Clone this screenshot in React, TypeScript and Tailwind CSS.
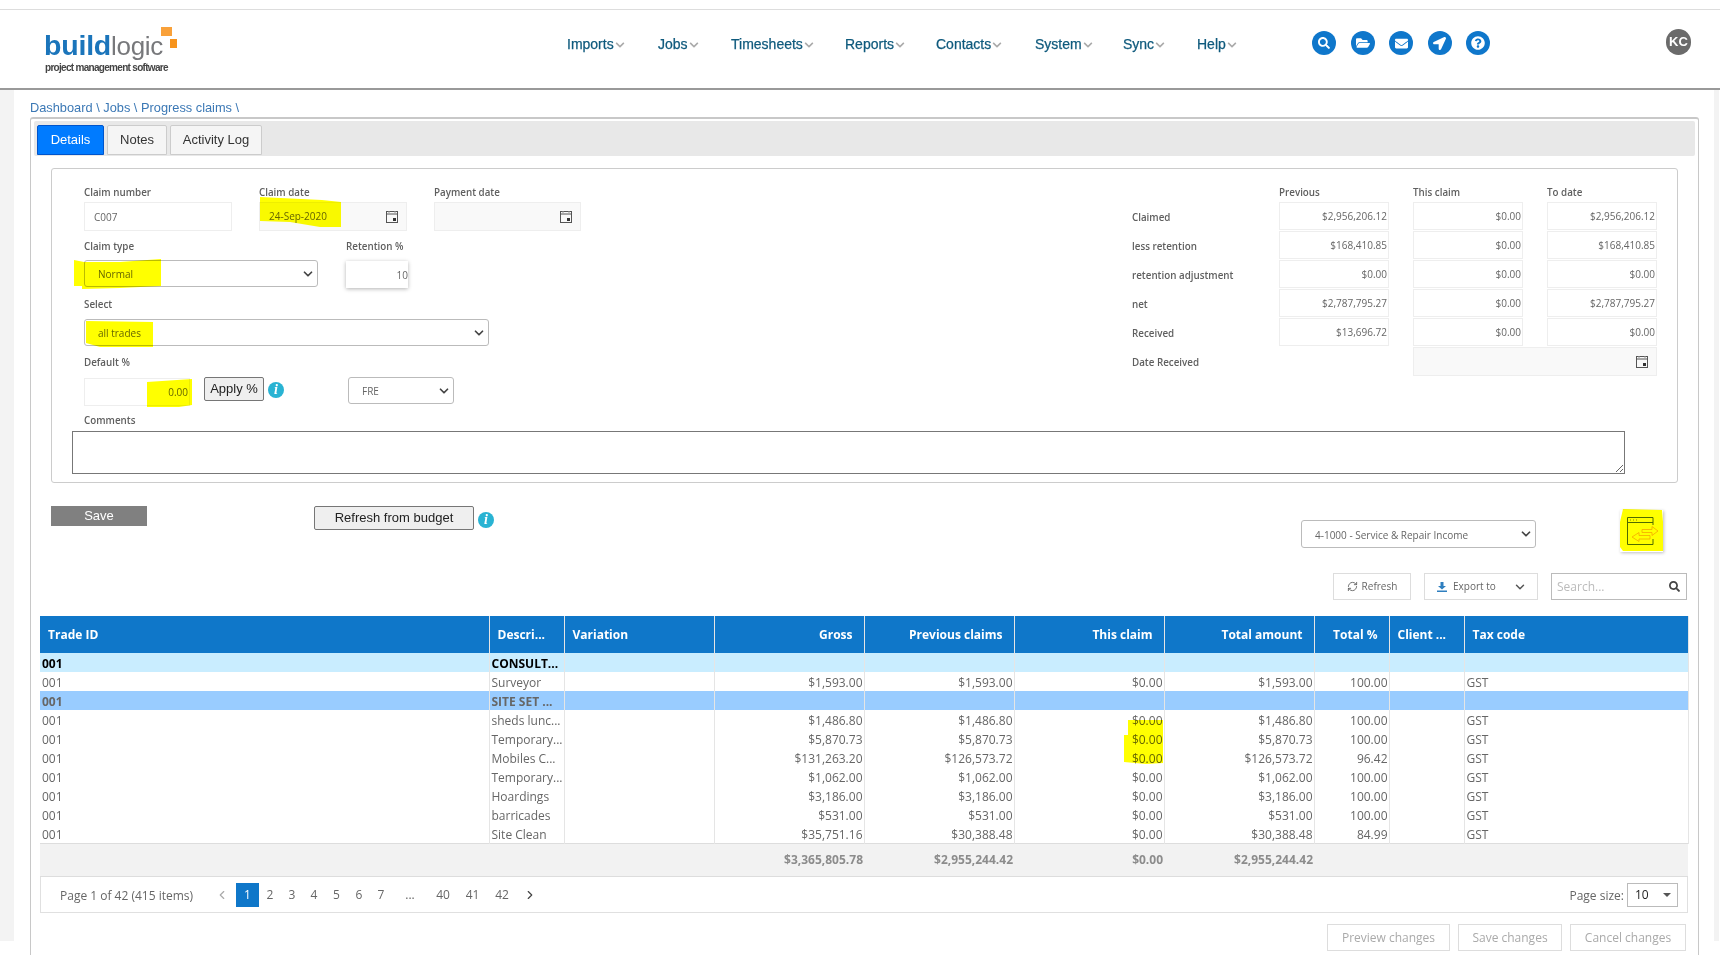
import { ChevronDown, ChevronLeft, ChevronRight, RefreshCw } from "lucide-react";
import {
    FaChevronDown,
    FaEnvelope,
    FaFolderOpen,
    FaLocationArrow,
    FaQuestionCircle,
    FaSearch,
} from "react-icons/fa";

const ARIAL = "font-['Liberation_Sans',Arial,sans-serif]";
const LABEL = "block h-[14px] text-[9.8px] font-semibold leading-[14px] text-[#5f5f5f]";
const ROW_LABEL = "pt-[9px] text-[9.8px] font-semibold leading-[14px] text-[#5f5f5f]";
const FIELD =
    "h-[29px] border border-[#eee] bg-white px-[9px] text-[10px] text-[#666] outline-none";
const AMOUNT =
    "h-[28px] w-[110px] border border-[#eee] bg-white pr-[1px] text-right text-[10px] text-[#666] outline-none";

const NAV = [
    { name: "Imports", width: "w-[91px]" },
    { name: "Jobs", width: "w-[73px]" },
    { name: "Timesheets", width: "w-[114px]" },
    { name: "Reports", width: "w-[91px]" },
    { name: "Contacts", width: "w-[99px]" },
    { name: "System", width: "w-[88px]" },
    { name: "Sync", width: "w-[74px]" },
    { name: "Help", width: "w-[60px]" },
];

const SUMMARY = [
    { label: "Claimed", values: ["$2,956,206.12", "$0.00", "$2,956,206.12"] },
    { label: "less retention", values: ["$168,410.85", "$0.00", "$168,410.85"] },
    { label: "retention adjustment", values: ["$0.00", "$0.00", "$0.00"] },
    { label: "net", values: ["$2,787,795.27", "$0.00", "$2,787,795.27"] },
    { label: "Received", values: ["$13,696.72", "$0.00", "$0.00"] },
];

const COLUMNS = [
    { title: "Trade ID", width: "w-[449px]", right: false },
    { title: "Descri...", width: "w-[75px]", right: false },
    { title: "Variation", width: "w-[150px]", right: false },
    { title: "Gross", width: "w-[150px]", right: true },
    { title: "Previous claims", width: "w-[150px]", right: true },
    { title: "This claim", width: "w-[150px]", right: true },
    { title: "Total amount", width: "w-[150px]", right: true },
    { title: "Total %", width: "w-[75px]", right: true },
    { title: "Client ...", width: "w-[75px]", right: false },
    { title: "Tax code", width: "w-[224px]", right: false },
];

type Row = { cells: string[]; tone?: "light" | "mid" };

const ROWS: Row[] = [
    { cells: ["001", "CONSULT...", "", "", "", "", "", "", "", ""], tone: "light" },
    { cells: ["001", "Surveyor", "", "$1,593.00", "$1,593.00", "$0.00", "$1,593.00", "100.00", "", "GST"] },
    { cells: ["001", "SITE SET ...", "", "", "", "", "", "", "", ""], tone: "mid" },
    { cells: ["001", "sheds lunc...", "", "$1,486.80", "$1,486.80", "$0.00", "$1,486.80", "100.00", "", "GST"] },
    { cells: ["001", "Temporary...", "", "$5,870.73", "$5,870.73", "$0.00", "$5,870.73", "100.00", "", "GST"] },
    { cells: ["001", "Mobiles C...", "", "$131,263.20", "$126,573.72", "$0.00", "$126,573.72", "96.42", "", "GST"] },
    { cells: ["001", "Temporary...", "", "$1,062.00", "$1,062.00", "$0.00", "$1,062.00", "100.00", "", "GST"] },
    { cells: ["001", "Hoardings", "", "$3,186.00", "$3,186.00", "$0.00", "$3,186.00", "100.00", "", "GST"] },
    { cells: ["001", "barricades", "", "$531.00", "$531.00", "$0.00", "$531.00", "100.00", "", "GST"] },
    { cells: ["001", "Site Clean", "", "$35,751.16", "$30,388.48", "$0.00", "$30,388.48", "84.99", "", "GST"] },
];

const TOTALS = ["", "", "", "$3,365,805.78", "$2,955,244.42", "$0.00", "$2,955,244.42", "", "", ""];

function CalendarIcon() {
    return (
        <svg width="12" height="12" viewBox="0 0 12 12" className="shrink-0">
            <rect x="0.5" y="0.5" width="11" height="11" fill="none" stroke="#555" />
            <path d="M0.5 3h11" stroke="#555" />
            <path d="M3 0v2M9 0v2" stroke="#999" />
            <rect x="7" y="7" width="3" height="3" fill="#333" />
        </svg>
    );
}

function InfoIcon() {
    return (
        <span className="flex h-[16px] w-[16px] shrink-0 items-center justify-center rounded-full bg-[#29b3d3] font-['Liberation_Serif',serif] text-[14px] font-bold italic leading-none text-white">
            i
        </span>
    );
}

function DateField({ value, className }: { value?: string; className: string }) {
    return (
        <div
            className={`flex items-center justify-between border border-[#eee] bg-[#f9f9f9] pl-[9px] pr-[8px] text-[10px] text-[#666] ${className}`}
        >
            <span>{value}</span>
            <CalendarIcon />
        </div>
    );
}

function Dropdown({ value, className }: { value: string; className: string }) {
    return (
        <div
            className={`flex h-[27px] items-center justify-between rounded-[3px] border border-[#bbb] bg-white pl-[13px] pr-[2px] text-[10px] text-[#666] ${className}`}
        >
            <span className="pt-[2px]">{value}</span>
            <ChevronDown size={14} strokeWidth={3} className="text-[#444]" />
        </div>
    );
}

function Logo() {
    return (
        <div className="relative ml-[44px] mt-[17px] h-[48px] w-[133px]">
            <div className="mt-[3px] h-[30px] whitespace-nowrap font-['Liberation_Sans',Arial,sans-serif] leading-[30px]">
                <span className="text-[28.5px] font-bold tracking-[-0.2px] text-[#1b75bb]">build</span>
                <span className="text-[26px] tracking-[-0.3px] text-[#77787b]">logic</span>
            </div>
            <div className="ml-[1px] mt-[2px] whitespace-nowrap font-['Liberation_Sans',Arial,sans-serif] text-[10px] font-bold leading-[12px] tracking-[-0.7px] text-[#444]">
                project management software
            </div>
            <span className="absolute left-[117px] top-0 h-[9px] w-[11px] bg-[#f9a13a]" />
            <span className="absolute left-[126px] top-[12px] h-[9px] w-[7px] bg-[#f7941d]" />
        </div>
    );
}

function Header() {
    const icons = [
        <FaSearch key="search" size={12} />,
        <FaFolderOpen key="folder" size={14} />,
        <FaEnvelope key="mail" size={13} />,
        <FaLocationArrow key="send" size={13} />,
        <FaQuestionCircle key="help" size={14} />,
    ];

    return (
        <header className="mt-[9px] flex h-[81px] items-start border-b-2 border-t border-b-[#999] border-t-[#ddd] bg-white">
            <Logo />
            <nav className={`ml-[390px] mt-[25px] flex ${ARIAL} text-[14px] leading-[18px] text-[#0f5a7d] [-webkit-text-stroke:0.25px]`}>
                {NAV.map((item) => (
                    <div key={item.name} className={`flex items-center gap-[1px] ${item.width}`}>
                        <span>{item.name}</span>
                        <FaChevronDown size={10} className="mt-[2px] text-[#aaa]" />
                    </div>
                ))}
            </nav>
            <div className="ml-[55px] mt-[21px] flex gap-[14.5px]">
                {icons.map((icon) => (
                    <span
                        key={icon.key}
                        className="flex h-[24px] w-[24px] items-center justify-center rounded-full bg-[#0f77cb] text-white"
                    >
                        {icon}
                    </span>
                ))}
            </div>
            <div
                className={`ml-[176px] mt-[19px] flex h-[26px] w-[25px] items-center justify-center rounded-full bg-[#6b6b6b] ${ARIAL} text-[13px] font-bold text-white`}
            >
                KC
            </div>
        </header>
    );
}

function ClaimForm() {
    return (
        <section className="ml-[20px] mt-[12px] h-[315px] w-[1627px] rounded-[3px] border border-[#ccc] pt-[17px]">
            <div className="flex justify-between pl-[32px] pr-[20px]">
                <div className="flex flex-col">
                    <div className="flex gap-[27px]">
                        <div>
                            <span className={LABEL}>Claim number</span>
                            <input readOnly value="C007" className={`mt-[2px] w-[148px] ${FIELD}`} />
                        </div>
                        <div>
                            <span className={LABEL}>Claim date</span>
                            <DateField value="24-Sep-2020" className="mt-[2px] h-[29px] w-[148px]" />
                        </div>
                        <div>
                            <span className={LABEL}>Payment date</span>
                            <DateField className="mt-[2px] h-[29px] w-[147px]" />
                        </div>
                    </div>
                    <div className="mt-[9px] flex gap-[28px]">
                        <div>
                            <span className={LABEL}>Claim type</span>
                            <Dropdown value="Normal" className="mt-[6px] w-[234px]" />
                        </div>
                        <div>
                            <span className={LABEL}>Retention %</span>
                            <input
                                readOnly
                                value="10"
                                className="mt-[7px] h-[27px] w-[62px] bg-white text-right text-[10px] text-[#666] shadow-[0_1px_4px_rgba(0,0,0,0.3)] outline-none"
                            />
                        </div>
                    </div>
                    <div className="mt-[10px]">
                        <span className={LABEL}>Select</span>
                        <Dropdown value="all trades" className="mt-[7px] w-[405px]" />
                    </div>
                    <div className="mt-[10px]">
                        <span className={LABEL}>Default %</span>
                        <div className="mt-[7px] flex h-[29px] items-start">
                            <input
                                readOnly
                                value="0.00"
                                className="mt-[1px] h-[28px] w-[106px] border border-[#eee] bg-white pr-[1px] text-right text-[10px] text-[#666] outline-none"
                            />
                            <button
                                className={`ml-[14px] h-[24px] w-[60px] rounded-[2px] border border-[#767676] bg-[#efefef] ${ARIAL} text-[13px] text-[#222]`}
                            >
                                Apply %
                            </button>
                            <span className="ml-[4px] mt-[5px]">
                                <InfoIcon />
                            </span>
                            <Dropdown value="FRE" className="ml-[64px] w-[106px]" />
                        </div>
                    </div>
                </div>

                <div className="grid grid-cols-[123px_110px_110px_110px] gap-x-[24px] gap-y-[1px] self-start text-[10px] text-[#666]">
                    <div className="h-[15px]" />
                    <span className={LABEL}>Previous</span>
                    <span className={LABEL}>This claim</span>
                    <span className={LABEL}>To date</span>
                    {SUMMARY.map((row) => (
                        <div key={row.label} className="contents">
                            <span className={ROW_LABEL}>{row.label}</span>
                            {row.values.map((value, i) => (
                                <input key={i} readOnly value={value} className={AMOUNT} />
                            ))}
                        </div>
                    ))}
                    <span className={ROW_LABEL}>Date Received</span>
                    <div />
                    <DateField className="col-span-2 h-[29px] pr-[7px]" />
                </div>
            </div>
            <div className="mt-[8px] pl-[32px]">
                <span className={LABEL}>Comments</span>
                <textarea
                    readOnly
                    className="-ml-[12px] mt-[3px] block h-[43px] w-[1553px] border border-[#777] bg-white"
                />
            </div>
        </section>
    );
}

function SwapIcon() {
    return (
        <div className="ml-[84px] mt-[4px] h-[42px] w-[43px] bg-white shadow-[1px_1px_3px_rgba(0,0,0,0.25)]">
            <svg width="43" height="42" viewBox="0 0 43 42" fill="none">
                <path d="M33 29v5.5H7.5V7.5H33V15" stroke="#4f6a10" />
                <path d="M7.5 12.5H33" stroke="#4f6a10" />
                <path d="M10 10h1M13 10h1M16 10h1" stroke="#7f9020" />
                <path
                    d="M22 19.5h10V16.5l6 4.5-6 4.5v-3H22z"
                    stroke="#f5a800"
                    strokeWidth="0.8"
                />
                <path
                    d="M30 25.5H19v-3l-7 4.5 7 4.5v-2.5h11z"
                    stroke="#f5a800"
                    strokeWidth="0.8"
                />
            </svg>
        </div>
    );
}

function Toolbar() {
    return (
        <>
            <div className="ml-[20px] mt-[23px] flex h-[47px] items-start">
                <button className={`h-[20px] w-[96px] bg-[#808080] ${ARIAL} text-[13px] text-white`}>Save</button>
                <button
                    className={`ml-[167px] h-[24px] w-[160px] rounded-[2px] border border-[#767676] bg-[#efefef] ${ARIAL} text-[13px] text-[#222]`}
                >
                    Refresh from budget
                </button>
                <span className="ml-[4px] mt-[6px]">
                    <InfoIcon />
                </span>
                <Dropdown value="4-1000 - Service & Repair Income" className="ml-[807px] mt-[14px] h-[28px] w-[235px]" />
                <SwapIcon />
            </div>
            <div className="ml-[1302px] mt-[20px] flex h-[27px] gap-[13px] text-[10px] text-[#666]">
                <button className="flex w-[78px] items-center justify-center gap-[4px] border border-[#ddd] bg-white">
                    <RefreshCw size={11} />
                    Refresh
                </button>
                <button className="flex w-[114px] items-center justify-between border border-[#ddd] bg-white pl-[12px] pr-[10px]">
                    <span className="flex items-center gap-[6px]">
                        <svg width="10" height="10" viewBox="0 0 10 10">
                            <path d="M3.5 0h3v4H9L5 7.5 1 4h2.5zM0 8.5h10V10H0z" fill="#2f7fbf" />
                        </svg>
                        Export to
                    </span>
                    <ChevronDown size={14} strokeWidth={2.5} className="text-[#555]" />
                </button>
                <div className="flex w-[136px] items-center justify-between border border-[#bbb] bg-white pl-[5px] pr-[6px] text-[12px]">
                    <span className="text-[#bbb]">Search...</span>
                    <FaSearch size={11} className="text-[#444]" />
                </div>
            </div>
        </>
    );
}

function Pager() {
    const pages = [
        { label: "1", width: "w-[23px] bg-[#0f77c9] text-white" },
        { label: "2", width: "w-[22px]" },
        { label: "3", width: "w-[22px]" },
        { label: "4", width: "w-[22px]" },
        { label: "5", width: "w-[23px]" },
        { label: "6", width: "w-[22px]" },
        { label: "7", width: "w-[22px]" },
        { label: "...", width: "w-[36px]" },
        { label: "40", width: "w-[30px]" },
        { label: "41", width: "w-[29px]" },
        { label: "42", width: "w-[30px]" },
    ];

    return (
        <div className="flex h-[36px] items-center border-x border-b border-[#e0e0e0] pl-[19px] pr-[9px] text-[12px] text-[#666]">
            <span className="mt-[3px] w-[151px] whitespace-nowrap">Page 1 of 42 (415 items)</span>
            <span className="flex w-[25px] justify-center pr-[3px] text-[#aaa]">
                <ChevronLeft size={14} />
            </span>
            {pages.map((page) => (
                <span key={page.label} className={`flex h-[24px] items-center justify-center ${page.width}`}>
                    {page.label}
                </span>
            ))}
            <span className="flex w-[26px] justify-center text-[#444]">
                <ChevronRight size={14} />
            </span>
            <span className="ml-auto mt-[2px]">Page size:</span>
            <div className="ml-[3px] flex h-[24px] w-[51px] items-center justify-between border border-[#bbb] pl-[7px] pr-[6px] text-[#222]">
                10
                <span className="h-0 w-0 border-x-[4px] border-t-[4px] border-x-transparent border-t-[#555]" />
            </div>
        </div>
    );
}

function Grid() {
    const toneClass = (tone?: Row["tone"]) => {
        if (tone === "light") return "bg-[#c9edff] font-bold text-black";
        if (tone === "mid") return "bg-[#99ccff] font-bold text-[#666]";
        return "bg-white text-[#666]";
    };

    return (
        <div className="ml-[9px] mt-[16px] w-[1648px]">
            <table className="w-full table-fixed border-collapse text-[12px]">
                <colgroup>
                    {COLUMNS.map((col) => (
                        <col key={col.title} className={col.width} />
                    ))}
                </colgroup>
                <thead>
                    <tr className="h-[37px] bg-[#0f77c9] text-white">
                        {COLUMNS.map((col) => (
                            <th
                                key={col.title}
                                className={`overflow-hidden whitespace-nowrap border-r border-black/10 font-bold ${
                                    col.right ? "pr-[11px] text-right" : "pl-[8px] text-left"
                                }`}
                            >
                                {col.title}
                            </th>
                        ))}
                    </tr>
                </thead>
                <tbody>
                    {ROWS.map((row, r) => (
                        <tr key={r} className={`h-[19px] ${toneClass(row.tone)}`}>
                            {row.cells.map((cell, c) => (
                                <td
                                    key={c}
                                    className={`overflow-hidden whitespace-nowrap border-r border-black/10 p-0 pt-[2px] leading-[17px] ${
                                        COLUMNS[c].right ? "pr-[1px] text-right" : "pl-[2px] text-left"
                                    }`}
                                >
                                    {cell}
                                </td>
                            ))}
                        </tr>
                    ))}
                </tbody>
                <tfoot>
                    <tr className="h-[33px] border-y border-[#ddd] bg-[#f2f2f2] font-bold text-[#8c8c8c]">
                        {TOTALS.map((total, i) => (
                            <td key={i} className="p-0 pr-[1px] text-right">
                                {total}
                            </td>
                        ))}
                    </tr>
                </tfoot>
            </table>
            <Pager />
        </div>
    );
}

function Marker() {
    const shapes = [
        "260,197 322,200 341,202 341,227 320,227 290,222 260,221",
        "74,260 84,262 120,262 161,259 161,286 120,288 82,289 82,286 74,286",
        "86,321 153,322 153,347 100,347 86,343",
        "147,382 192,379 192,405 179,407 147,407",
        "1623,509 1662,510 1663,522 1663,551 1623,551 1620,547 1620,522",
        "1128,720 1163,720 1163,763 1146,764 1124,762 1124,735 1128,735",
    ];

    return (
        <svg
            width="1720"
            height="955"
            className="pointer-events-none absolute left-0 top-0 mix-blend-multiply"
        >
            {shapes.map((points) => (
                <polygon key={points} points={points} fill="#ffff00" />
            ))}
        </svg>
    );
}

export default function App() {
    return (
        <div className="relative h-[955px] w-[1720px] overflow-hidden bg-white font-['Open_Sans',sans-serif]">
            <Header />
            <div className="flex">
                <div className="h-[851px] w-[14px] shrink-0 bg-[#f3f3f3]" />
                <main className="ml-[16px] w-[1669px]">
                    <div className={`flex h-[27px] items-end pb-[1px] ${ARIAL} text-[12.8px] leading-[16px] text-[#3b78b5]`}>
                        Dashboard \ Jobs \ Progress claims \
                    </div>
                    <div className="h-[900px] rounded-t-[3px] border-x border-t-2 border-[#c8c8c8]">
                        <div className="mx-[3px] mt-[2px] flex h-[35px] items-start gap-[3px] rounded-[2px] bg-[#e8e8e8] pl-[3px] pt-[4px]">
                            <span className={`flex h-[30px] w-[67px] items-center justify-center rounded-t-[2px] border border-[#0055cc] bg-[#007bff] ${ARIAL} text-[13px] text-white`}>
                                Details
                            </span>
                            <span className={`flex h-[30px] w-[60px] items-center justify-center rounded-t-[2px] border border-[#ccc] bg-[#f5f5f5] ${ARIAL} text-[13px] text-[#333]`}>
                                Notes
                            </span>
                            <span className={`flex h-[30px] w-[92px] items-center justify-center rounded-t-[2px] border border-[#ccc] bg-[#f5f5f5] ${ARIAL} text-[13px] text-[#333]`}>
                                Activity Log
                            </span>
                        </div>
                        <ClaimForm />
                        <Toolbar />
                        <Grid />
                        <div className="ml-[1296px] mt-[11px] flex h-[27px] gap-[8px] text-[12px] text-[#aaa]">
                            <span className="flex w-[123px] items-center justify-center border border-[#ddd]">Preview changes</span>
                            <span className="flex w-[104px] items-center justify-center border border-[#ddd]">Save changes</span>
                            <span className="flex w-[116px] items-center justify-center border border-[#ddd]">Cancel changes</span>
                        </div>
                    </div>
                </main>
                <div className="ml-[15px] h-[851px] w-[5px] shrink-0 bg-[#f3f3f3]" />
            </div>
            <Marker />
        </div>
    );
}
